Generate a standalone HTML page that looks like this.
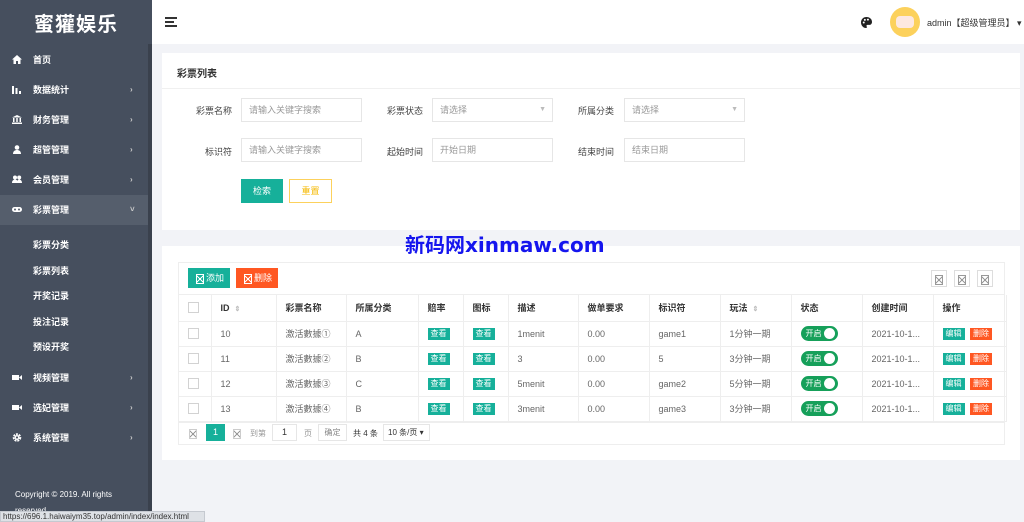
<!DOCTYPE html>
<html><head><meta charset="utf-8"><style>
*{margin:0;padding:0;box-sizing:border-box}
body{width:1024px;height:522px;overflow:hidden;background:#f2f3f7;font-family:"Liberation Sans","Noto Sans CJK SC",sans-serif;font-size:9px;color:#555;position:relative}
.a{position:absolute}
.side{left:0;top:0;width:152px;height:522px;background:#464f5e}
.sb{left:148px;top:44px;width:4px;height:478px;background:#3a414d}
.logo{left:0;top:8px;width:152px;text-align:center;color:#fff;font-size:20px;font-weight:bold;letter-spacing:1px}
.mi{left:0;width:148px;height:30px;color:#fff;font-size:9px;font-weight:bold;line-height:30px}
.mi .t{position:absolute;left:33px}
.mi .ic{position:absolute;left:12px;top:10px;width:10px;height:9px}
.mi .ar{position:absolute;left:130px;color:#ccc;font-size:8px}
.sub{left:33px;color:#fff;font-size:9px;font-weight:bold}
.hdr{left:152px;top:0;width:872px;height:44px;background:#fff}
.card{background:#fff}
.lbl{font-size:9px;color:#444;text-align:right;width:60px}
.inp{height:24px;border:1px solid #e6e6e6;background:#fff;color:#999;font-size:9px;line-height:22px;padding-left:7px}
.tb{left:178px;top:294px;width:827px;border:1px solid #eee}
table{border-collapse:collapse;width:827px;table-layout:fixed}
td{height:25px;border-bottom:1px solid #eee;border-right:1px solid #eee;padding-left:9px;color:#666;font-size:9px;white-space:nowrap;overflow:hidden}
tr.h td{height:26px;color:#333;font-weight:bold}
.cb{display:inline-block;width:11px;height:11px;border:1px solid #d2d2d2;background:#fff;vertical-align:middle}
.bt{display:inline-block;background:#16b09a;color:#fff;font-size:8px;padding:0 3px;height:12px;line-height:12px}
.bd{background:#ff5722}
.sw{display:inline-block;width:37px;height:15px;border-radius:8px;background:#16a05a;color:#fff;font-size:8px;line-height:15px;padding-left:5px;position:relative;vertical-align:middle}
.sw:after{content:"";position:absolute;right:3px;top:2px;width:11px;height:11px;border-radius:50%;background:#fff}
.sort{color:#bbb;font-size:7px;margin-left:5px}
.x{display:inline-block;width:8px;height:10px;border:1px solid #fff;background:linear-gradient(45deg,transparent 45%,#fff 45%,#fff 55%,transparent 55%),linear-gradient(-45deg,transparent 45%,#fff 45%,#fff 55%,transparent 55%);vertical-align:middle;margin-right:2px}
.xg{border-color:#999;background:linear-gradient(45deg,transparent 45%,#999 45%,#999 55%,transparent 55%),linear-gradient(-45deg,transparent 45%,#999 45%,#999 55%,transparent 55%)}
</style></head><body>
<div class="a side"></div>
<div class="a sb"></div>
<div class="a logo">蜜獾娱乐</div>
<div class="a mi" style="top:45px"><svg class="ic" viewBox="0 0 10 9"><path d="M5 0L0 4.5h1.5V9h2.5V6h2v3h2.5V4.5H10z" fill="#fff"/></svg><span class="t">首页</span></div>
<div class="a mi" style="top:75px"><svg class="ic" viewBox="0 0 10 9"><rect x="0" y="1" width="2" height="8" fill="#fff"/><rect x="3.5" y="3" width="2" height="6" fill="#fff"/><rect x="7" y="6" width="2" height="3" fill="#fff"/></svg><span class="t">数据统计</span><span class="ar">›</span></div>
<div class="a mi" style="top:105px"><svg class="ic" viewBox="0 0 10 9"><path d="M5 0L0 2.5h10zM1 3h1.5v4H1zM4.25 3h1.5v4h-1.5zM7.5 3H9v4H7.5zM0 7.5h10V9H0z" fill="#fff"/></svg><span class="t">财务管理</span><span class="ar">›</span></div>
<div class="a mi" style="top:135px"><svg class="ic" viewBox="0 0 10 9"><circle cx="5" cy="2.5" r="2.3" fill="#fff"/><path d="M1 9c0-3 2-4 4-4s4 1 4 4z" fill="#fff"/></svg><span class="t">超管管理</span><span class="ar">›</span></div>
<div class="a mi" style="top:165px"><svg class="ic" viewBox="0 0 10 9"><circle cx="3" cy="2.5" r="2" fill="#fff"/><circle cx="7.2" cy="2.5" r="2" fill="#fff"/><path d="M0 8c0-2.5 1.5-3.5 3-3.5S6 5.5 6 8zM5 8c0-2.5 1-3.5 2.2-3.5S10 5.5 10 8z" fill="#fff"/></svg><span class="t">会员管理</span><span class="ar">›</span></div>
<div class="a mi" style="top:195px;background:#555e6c"><svg class="ic" viewBox="0 0 10 9"><rect x="0" y="2" width="10" height="5" rx="2.5" fill="#fff"/><circle cx="3" cy="4.5" r="1" fill="#555e6c"/><circle cx="7" cy="4.5" r="1" fill="#555e6c"/></svg><span class="t">彩票管理</span><span class="ar">˅</span></div>
<div class="a sub" style="top:238px">彩票分类</div>
<div class="a sub" style="top:264px">彩票列表</div>
<div class="a sub" style="top:289px">开奖记录</div>
<div class="a sub" style="top:315px">投注记录</div>
<div class="a sub" style="top:340px">预设开奖</div>
<div class="a mi" style="top:363px"><svg class="ic" viewBox="0 0 10 9"><rect x="0" y="2" width="7" height="5" fill="#fff"/><path d="M7 4.5L10 2v5z" fill="#fff"/></svg><span class="t">视频管理</span><span class="ar">›</span></div>
<div class="a mi" style="top:393px"><svg class="ic" viewBox="0 0 10 9"><rect x="0" y="2" width="7" height="5" fill="#fff"/><path d="M7 4.5L10 2v5z" fill="#fff"/></svg><span class="t">选妃管理</span><span class="ar">›</span></div>
<div class="a mi" style="top:423px"><svg class="ic" viewBox="0 0 10 10"><circle cx="5" cy="5" r="3.5" fill="none" stroke="#fff" stroke-width="2.5" stroke-dasharray="2 1"/><circle cx="5" cy="5" r="2.5" fill="#fff"/><circle cx="5" cy="5" r="1.2" fill="#464f5e"/></svg><span class="t">系统管理</span><span class="ar">›</span></div>
<div class="a" style="left:15px;top:487px;color:#fff;font-size:8px;line-height:16px;width:120px">Copyright © 2019. All rights reserved.</div>
<div class="a" style="left:0;top:511px;width:205px;height:11px;background:#dee1e6;border:1px solid #c5c9d0;font-size:8px;color:#333;line-height:10px;padding-left:2px;white-space:nowrap;overflow:hidden">https://696.1.haiwaiym35.top/admin/index/index.html</div>

<div class="a hdr"></div>
<div class="a" style="left:165px;top:17px;width:12px;height:1.5px;background:#333"></div>
<div class="a" style="left:165px;top:21px;width:9px;height:1.5px;background:#333"></div>
<div class="a" style="left:165px;top:25px;width:12px;height:1.5px;background:#333"></div>
<svg class="a" style="left:861px;top:17px" width="11" height="11" viewBox="0 0 10 10"><path d="M5 0C2 0 0 2.2 0 5s2.2 5 4.5 5c1 0 1-1 .6-1.5-.4-.6 0-1.3.8-1.3H7.5C9 7.2 10 6 10 4.5 10 2 8 0 5 0z" fill="#222"/><circle cx="2.5" cy="5" r=".9" fill="#fff"/><circle cx="3.5" cy="2.6" r=".9" fill="#fff"/><circle cx="6.3" cy="2.4" r=".9" fill="#fff"/></svg>
<div class="a" style="left:890px;top:7px;width:30px;height:30px;border-radius:50%;background:#fcd15c"></div>
<div class="a" style="left:896px;top:16px;width:18px;height:12px;border-radius:4px;background:#fde8e0"></div>
<div class="a" style="left:927px;top:16px;font-size:9px;color:#333">admin【超级管理员】 ▾</div>

<div class="a card" style="left:162px;top:53px;width:858px;height:177px"></div>
<div class="a" style="left:177px;top:65px;font-size:10px;font-weight:bold;color:#333">彩票列表</div>
<div class="a" style="left:162px;top:88px;width:858px;height:1px;background:#f0f0f0"></div>
<div class="a lbl" style="left:172px;top:104px">彩票名称</div>
<div class="a inp" style="left:241px;top:98px;width:121px">请输入关键字搜索</div>
<div class="a lbl" style="left:363px;top:104px">彩票状态</div>
<div class="a inp" style="left:432px;top:98px;width:121px">请选择<span style="position:absolute;right:6px;color:#bbb;font-size:7px">▼</span></div>
<div class="a lbl" style="left:554px;top:104px">所属分类</div>
<div class="a inp" style="left:624px;top:98px;width:121px">请选择<span style="position:absolute;right:6px;color:#bbb;font-size:7px">▼</span></div>
<div class="a lbl" style="left:172px;top:145px">标识符</div>
<div class="a inp" style="left:241px;top:138px;width:121px">请输入关键字搜索</div>
<div class="a lbl" style="left:363px;top:145px">起始时间</div>
<div class="a inp" style="left:432px;top:138px;width:121px">开始日期</div>
<div class="a lbl" style="left:554px;top:145px">结束时间</div>
<div class="a inp" style="left:624px;top:138px;width:121px">结束日期</div>
<div class="a" style="left:241px;top:179px;width:42px;height:24px;background:#16b09a;color:#fff;text-align:center;line-height:24px">检索</div>
<div class="a" style="left:289px;top:179px;width:43px;height:24px;border:1px solid #fcd15c;background:#fff;color:#f5b800;text-align:center;line-height:22px">重置</div>

<div class="a card" style="left:162px;top:246px;width:858px;height:214px"></div>
<div class="a" style="left:405px;top:229px;font-size:20px;font-weight:bold;color:#1515ee;font-family:'DejaVu Sans','Noto Sans CJK SC',sans-serif;z-index:5">新码网xinmaw.com</div>
<div class="a" style="left:178px;top:262px;width:827px;height:183px;border:1px solid #eee"></div>
<div class="a" style="left:188px;top:268px;width:42px;height:20px;background:#16b09a;color:#fff;line-height:20px;padding-left:8px"><span class="x"></span>添加</div>
<div class="a" style="left:236px;top:268px;width:42px;height:20px;background:#ff5722;color:#fff;line-height:20px;padding-left:8px"><span class="x"></span>删除</div>
<div class="a" style="left:931px;top:270px;width:16px;height:17px;border:1px solid #ddd;padding:3px 0 0 3px"><span class="x xg"></span></div>
<div class="a" style="left:954px;top:270px;width:16px;height:17px;border:1px solid #ddd;padding:3px 0 0 3px"><span class="x xg"></span></div>
<div class="a" style="left:977px;top:270px;width:16px;height:17px;border:1px solid #ddd;padding:3px 0 0 3px"><span class="x xg"></span></div>

<div class="a tb"><table>
<colgroup><col style="width:32px"><col style="width:65px"><col style="width:70px"><col style="width:72px"><col style="width:45px"><col style="width:45px"><col style="width:70px"><col style="width:71px"><col style="width:71px"><col style="width:71px"><col style="width:71px"><col style="width:71px"><col style="width:73px"></colgroup>
<tr class="h"><td><span class="cb"></span></td><td>ID<span class="sort">⇕</span></td><td>彩票名称</td><td>所属分类</td><td>赔率</td><td>图标</td><td>描述</td><td>做单要求</td><td>标识符</td><td>玩法<span class="sort">⇕</span></td><td>状态</td><td>创建时间</td><td>操作</td></tr>
<tr><td><span class="cb"></span></td><td>10</td><td>激活數據①</td><td>A</td><td><span class="bt">查看</span></td><td><span class="bt">查看</span></td><td>1menit</td><td>0.00</td><td>game1</td><td>1分钟一期</td><td><span class="sw">开启</span></td><td>2021-10-1...</td><td><span class="bt">编辑</span> <span class="bt bd" style="margin-left:3px">删除</span></td></tr>
<tr><td><span class="cb"></span></td><td>11</td><td>激活數據②</td><td>B</td><td><span class="bt">查看</span></td><td><span class="bt">查看</span></td><td>3</td><td>0.00</td><td>5</td><td>3分钟一期</td><td><span class="sw">开启</span></td><td>2021-10-1...</td><td><span class="bt">编辑</span> <span class="bt bd" style="margin-left:3px">删除</span></td></tr>
<tr><td><span class="cb"></span></td><td>12</td><td>激活數據③</td><td>C</td><td><span class="bt">查看</span></td><td><span class="bt">查看</span></td><td>5menit</td><td>0.00</td><td>game2</td><td>5分钟一期</td><td><span class="sw">开启</span></td><td>2021-10-1...</td><td><span class="bt">编辑</span> <span class="bt bd" style="margin-left:3px">删除</span></td></tr>
<tr><td><span class="cb"></span></td><td>13</td><td>激活數據④</td><td>B</td><td><span class="bt">查看</span></td><td><span class="bt">查看</span></td><td>3menit</td><td>0.00</td><td>game3</td><td>3分钟一期</td><td><span class="sw">开启</span></td><td>2021-10-1...</td><td><span class="bt">编辑</span> <span class="bt bd" style="margin-left:3px">删除</span></td></tr>
</table></div>

<div class="a" style="left:189px;top:428px"><span class="x xg" style="border-color:#ccc"></span></div>
<div class="a" style="left:206px;top:424px;width:19px;height:17px;background:#16b09a;color:#fff;text-align:center;line-height:17px">1</div>
<div class="a" style="left:233px;top:428px"><span class="x xg" style="border-color:#ccc"></span></div>
<div class="a" style="left:250px;top:428px;color:#999;font-size:8px">到第</div>
<div class="a" style="left:272px;top:424px;width:25px;height:17px;border:1px solid #e6e6e6;text-align:center;line-height:15px;color:#333">1</div>
<div class="a" style="left:304px;top:428px;color:#999;font-size:8px">页</div>
<div class="a" style="left:318px;top:424px;width:29px;height:17px;border:1px solid #e6e6e6;text-align:center;line-height:15px;color:#888;font-size:8px">确定</div>
<div class="a" style="left:353px;top:428px;color:#333;font-size:8px">共 4 条</div>
<div class="a" style="left:383px;top:424px;width:47px;height:17px;border:1px solid #e6e6e6;line-height:15px;color:#333;font-size:8px;padding-left:4px">10 条/页 ▾</div>
</body></html>
